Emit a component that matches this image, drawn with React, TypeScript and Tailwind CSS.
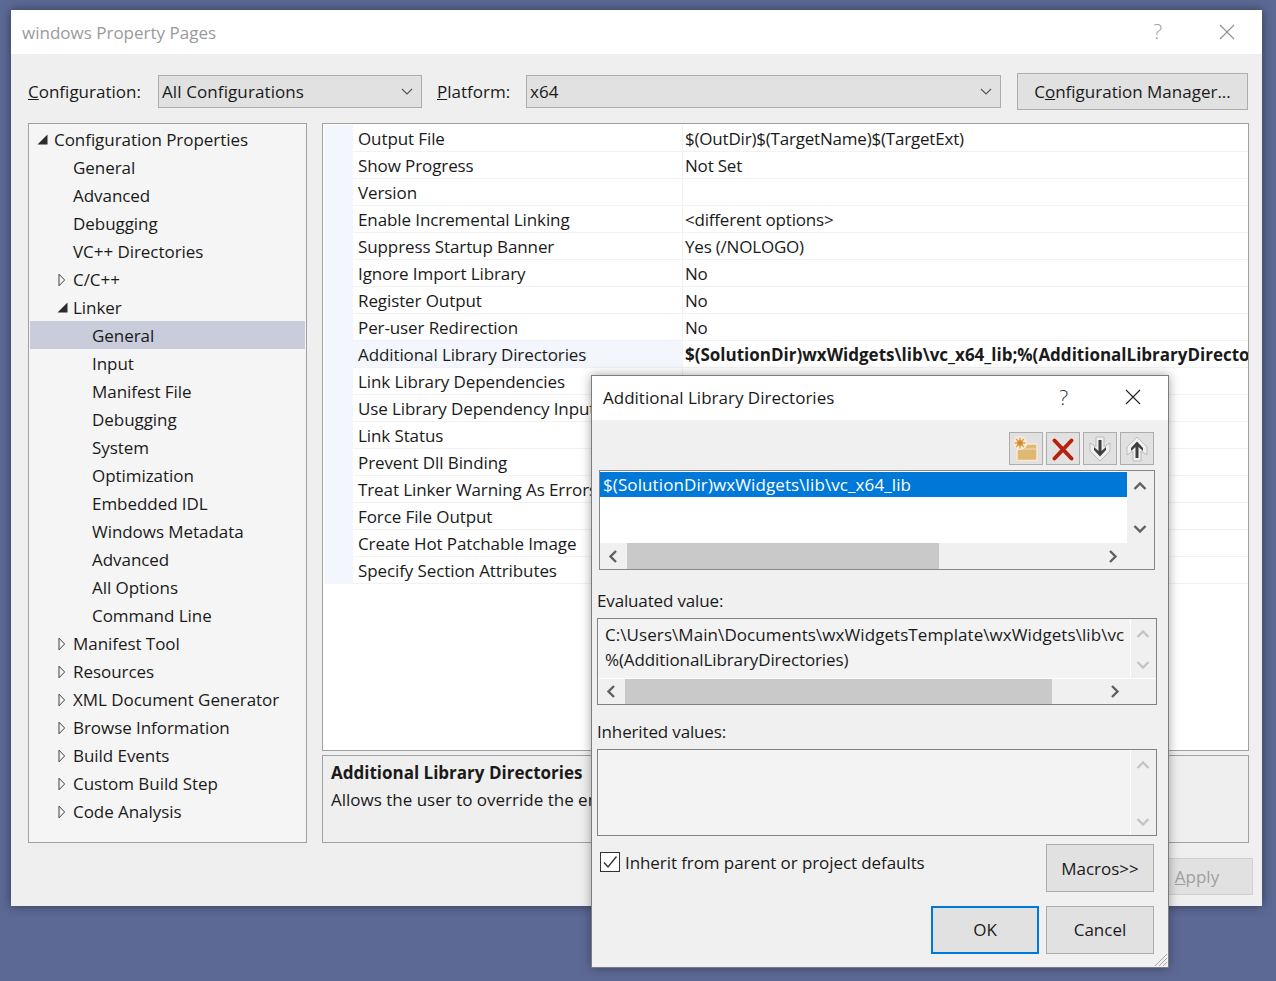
import React from "react";

const FONT = "font-['Open_Sans','Noto_Sans',sans-serif]";

type Dir = "up" | "down" | "left" | "right";
const CHEVRON: Record<Dir, string> = {
  up: "M1.5 8 L7 2.5 L12.5 8",
  down: "M1.5 3 L7 8.5 L12.5 3",
  left: "M8 1 L2.5 6.5 L8 12",
  right: "M3 1 L8.5 6.5 L3 12",
};

function Chevron({ dir, color = "#606060" }: { dir: Dir; color?: string }) {
  const vertical = dir === "up" || dir === "down";
  return (
    <svg width={vertical ? 14 : 11} height={vertical ? 11 : 13} viewBox={vertical ? "0 0 14 11" : "0 0 11 13"}>
      <path d={CHEVRON[dir]} fill="none" stroke={color} strokeWidth="2.4" />
    </svg>
  );
}

function Closed() {
  return (
    <svg width="8" height="14" viewBox="0 0 8 14" className="shrink-0">
      <path d="M1 1.2 L6.6 7 L1 12.8 Z" fill="none" stroke="#404040" strokeWidth="1" />
    </svg>
  );
}

function Open() {
  return (
    <svg width="11" height="11" viewBox="0 0 11 11" className="shrink-0">
      <path d="M10.5 0.5 V10.5 H0.5 Z" fill="#2b2b2b" />
    </svg>
  );
}

function Close({ color }: { color: string }) {
  return (
    <svg width="16" height="16" viewBox="0 0 16 16">
      <path d="M1 1 L15 15 M15 1 L1 15" stroke={color} strokeWidth="1.1" fill="none" />
    </svg>
  );
}

const tree: { t: string; lvl: number; k?: "o" | "c"; sel?: boolean }[] = [
  { t: "Configuration Properties", lvl: 0, k: "o" },
  { t: "General", lvl: 1 },
  { t: "Advanced", lvl: 1 },
  { t: "Debugging", lvl: 1 },
  { t: "VC++ Directories", lvl: 1 },
  { t: "C/C++", lvl: 1, k: "c" },
  { t: "Linker", lvl: 1, k: "o" },
  { t: "General", lvl: 2, sel: true },
  { t: "Input", lvl: 2 },
  { t: "Manifest File", lvl: 2 },
  { t: "Debugging", lvl: 2 },
  { t: "System", lvl: 2 },
  { t: "Optimization", lvl: 2 },
  { t: "Embedded IDL", lvl: 2 },
  { t: "Windows Metadata", lvl: 2 },
  { t: "Advanced", lvl: 2 },
  { t: "All Options", lvl: 2 },
  { t: "Command Line", lvl: 2 },
  { t: "Manifest Tool", lvl: 1, k: "c" },
  { t: "Resources", lvl: 1, k: "c" },
  { t: "XML Document Generator", lvl: 1, k: "c" },
  { t: "Browse Information", lvl: 1, k: "c" },
  { t: "Build Events", lvl: 1, k: "c" },
  { t: "Custom Build Step", lvl: 1, k: "c" },
  { t: "Code Analysis", lvl: 1, k: "c" },
];

const props: [string, string, boolean?][] = [
  ["Output File", "$(OutDir)$(TargetName)$(TargetExt)"],
  ["Show Progress", "Not Set"],
  ["Version", ""],
  ["Enable Incremental Linking", "<different options>"],
  ["Suppress Startup Banner", "Yes (/NOLOGO)"],
  ["Ignore Import Library", "No"],
  ["Register Output", "No"],
  ["Per-user Redirection", "No"],
  ["Additional Library Directories", "$(SolutionDir)wxWidgets\\lib\\vc_x64_lib;%(AdditionalLibraryDirectories)", true],
  ["Link Library Dependencies", ""],
  ["Use Library Dependency Inputs", ""],
  ["Link Status", ""],
  ["Prevent Dll Binding", ""],
  ["Treat Linker Warning As Errors", ""],
  ["Force File Output", ""],
  ["Create Hot Patchable Image", ""],
  ["Specify Section Attributes", ""],
];

function Select({ text, className }: { text: string; className: string }) {
  return (
    <div className={`h-[33px] flex items-center justify-between bg-[#e1e1e1] border border-[#adadad] pl-[3px] pr-[8px] ${className}`}>
      <span className="tracking-[0.1px] pt-[1px]">{text}</span>
      <svg width="12" height="7" viewBox="0 0 12 7">
        <path d="M1 1 L6 6 L11 1" fill="none" stroke="#555" strokeWidth="1.1" />
      </svg>
    </div>
  );
}

function ToolBtn({ children }: { children: React.ReactNode }) {
  return (
    <div className="w-[34px] h-[33px] bg-[#e1e1e1] border border-[#adadad] flex items-center justify-center">
      {children}
    </div>
  );
}

function DlgBtn({ children, primary }: { children: React.ReactNode; primary?: boolean }) {
  return (
    <div
      className={`w-[108px] h-[48px] bg-[#e1e1e1] flex items-center justify-center ${
        primary ? "border-2 border-[#0078d7]" : "border border-[#adadad]"
      }`}
    >
      {children}
    </div>
  );
}

export default function App() {
  return (
    <div className={`relative w-[1276px] h-[981px] overflow-hidden bg-[#5c6995] text-[#1a1a1a] text-[17px] leading-[24px] ${FONT}`}>
      {/* Main window */}
      <div className="absolute left-[11px] top-[10px] w-[1251px] h-[896px] bg-[#efefef] shadow-[0_0_10px_rgba(0,0,0,0.45)] flex flex-col">
        <div className="h-[44px] shrink-0 bg-white flex items-center pl-[11px] text-[#9a9a9a]">
          <span className="flex-1 pt-[2px]">windows Property Pages</span>
          <span className="text-[21px] font-light text-[#a0a0a0] mr-[57px] -mt-[3px]">?</span>
          <span className="mr-[27px] -mt-[1px]">
            <Close color="#8f8f8f" />
          </span>
        </div>
        <div className="flex-1 flex flex-col pl-[17px] pr-[13px] pt-[19px]">
          <div className="h-[37px] flex items-center">
            <span className="w-[130px]">
              <u>C</u>onfiguration:
            </span>
            <Select text="All Configurations" className="w-[264px]" />
            <span className="ml-[15px] w-[89px]">
              <u>P</u>latform:
            </span>
            <Select text="x64" className="w-[475px]" />
            <div className="ml-[16px] w-[231px] h-[37px] bg-[#e1e1e1] border border-[#adadad] flex items-center justify-center">
              <span className="pt-[1px]">
                C<u>o</u>nfiguration Manager...
              </span>
            </div>
          </div>
          <div className="mt-[13px] flex gap-[15px]">
            {/* Tree */}
            <div className="w-[279px] h-[720px] bg-[#f5f5f5] border border-[#a0a0a0] pt-[1px] px-[1px]">
              {tree.map((n, i) => (
                <div
                  key={i}
                  className={`relative h-[28px] flex items-center pt-[1px] ${n.sel ? "bg-[#c9ccdb]" : ""} ${
                    n.lvl === 0 ? "pl-[24px]" : n.lvl === 1 ? "pl-[43px]" : "pl-[62px]"
                  }`}
                >
                  {n.k && (
                    <span className={`absolute flex ${n.lvl === 0 ? "left-[7px]" : n.k === "o" ? "left-[27px]" : "left-[28px]"}`}>
                      {n.k === "o" ? <Open /> : <Closed />}
                    </span>
                  )}
                  <span className="tracking-[-0.05px]">{n.t}</span>
                </div>
              ))}
            </div>
            <div className="w-[927px] flex flex-col gap-[4px]">
              {/* Grid */}
              <div className="h-[628px] bg-white border border-[#a0a0a0] pt-[1px] pl-[1px] overflow-hidden">
                {props.map(([name, val, bold], i) => (
                  <div key={i} className="h-[27px] flex">
                    <div className="w-[29px] bg-[#f3f6fc]" />
                    <div
                      className={`w-[329px] flex items-center pl-[5px] pt-[2px] border-b border-[#f2f2f2] whitespace-nowrap overflow-hidden tracking-[-0.1px] ${
                        bold ? "bg-[#f3f6fc]" : ""
                      }`}
                    >
                      {name}
                    </div>
                    <div
                      className={`flex-1 min-w-0 flex items-center pl-[2px] pt-[2px] border-b border-l border-[#f2f2f2] whitespace-nowrap overflow-hidden ${
                        bold ? "font-bold" : "tracking-[-0.2px]"
                      }`}
                    >
                      {val}
                    </div>
                  </div>
                ))}
              </div>
              {/* Description */}
              <div className="h-[88px] border border-[#a0a0a0] pl-[8px] pt-[5px]">
                <div className="font-bold">Additional Library Directories</div>
                <div className="mt-[3px]">Allows the user to override the environmental library path</div>
              </div>
            </div>
          </div>
          <div className="mt-[15px] flex justify-end -mr-[4px]">
            <div className="w-[112px] h-[37px] bg-[#e1e1e1] border border-[#cfcfcf] flex items-center justify-center text-[#9f9f9f]">
              <span className="pt-[1px]">
                <u>A</u>pply
              </span>
            </div>
          </div>
        </div>
      </div>

      {/* Dialog */}
      <div className="absolute left-[591px] top-[375px] w-[578px] h-[593px] bg-[#f0f0f0] border border-[#7d7d7d] shadow-[0_0_10px_rgba(0,0,0,0.35)] flex flex-col">
        <div className="h-[44px] shrink-0 bg-white flex items-center pl-[11px]">
          <span className="flex-1 -mt-[1px]">Additional Library Directories</span>
          <span className="text-[21px] font-light mr-[57px] text-[#333] -mt-[3px]">?</span>
          <span className="mr-[27px] -mt-[2px]">
            <Close color="#222" />
          </span>
        </div>

        <div className="mt-[12px] mr-[14px] flex justify-end gap-[3px]">
          <ToolBtn>
            <svg width="30" height="28" viewBox="0 0 30 28">
              <path d="M6 12 H14 L16 9 H26 V25.5 H6 Z" fill="#e0b876" stroke="#f6ead2" strokeWidth="1.5" />
              <path d="M8 14 H25" stroke="#f3dfb8" strokeWidth="1" />
              <circle cx="9" cy="8" r="7" fill="#f8ecd6" />
              <path d="M9 2.5 V13.5 M3.5 8 H14.5 M5 4 L13 12 M13 4 L5 12" stroke="#dca04e" strokeWidth="1.3" />
              <circle cx="9" cy="8" r="2.8" fill="#d48a2e" />
            </svg>
          </ToolBtn>
          <ToolBtn>
            <svg width="26" height="26" viewBox="0 0 26 26">
              <path d="M4 4 L22 23 M22 4 L4 23" stroke="#ece0dc" strokeWidth="7" strokeLinecap="round" />
              <path d="M4.5 4.5 L21.5 22.5 M21.5 4.5 L4.5 22.5" stroke="#b3230f" strokeWidth="4" strokeLinecap="round" />
            </svg>
          </ToolBtn>
          <ToolBtn>
            <svg width="22" height="26" viewBox="0 0 22 26">
              <path d="M7 1 H15 V11 L21 7 V15 L11 25 L1 15 V7 L7 11 Z" fill="#f0f0f0" stroke="#bbb" strokeWidth="1" />
              <path d="M9.5 4 H12.5 V15 L17 11 V14 L11 20.5 L5 14 V11 L9.5 15 Z" fill="#3f3f3f" />
            </svg>
          </ToolBtn>
          <ToolBtn>
            <svg width="22" height="26" viewBox="0 0 22 26">
              <path d="M7 25 H15 V15 L21 19 V11 L11 1 L1 11 V19 L7 15 Z" fill="#f0f0f0" stroke="#bbb" strokeWidth="1" />
              <path d="M9.5 22 H12.5 V11 L17 15 V12 L11 5.5 L5 12 V15 L9.5 11 Z" fill="#3f3f3f" />
            </svg>
          </ToolBtn>
        </div>

        {/* List */}
        <div className="ml-[7px] mt-[5px] w-[556px] h-[100px] border border-[#828790] flex flex-col">
          <div className="h-[72px] flex">
            <div className="w-[527px] bg-white pt-[1px]">
              <div className="h-[25px] bg-[#0078d7] text-white pl-[3px] pt-[1px] flex items-center whitespace-nowrap tracking-[0.1px]">
                $(SolutionDir)wxWidgets\lib\vc_x64_lib
              </div>
            </div>
            <div className="flex-1 bg-[#f0f0f0] flex flex-col items-center justify-between pt-[10px] pb-[9px] pr-[1px]">
              <Chevron dir="up" />
              <Chevron dir="down" />
            </div>
          </div>
          <div className="flex-1 bg-[#f0f0f0] flex items-center">
            <div className="w-[27px] flex justify-center">
              <Chevron dir="left" />
            </div>
            <div className="w-[312px] h-full bg-[#c9c9c9]" />
            <div className="flex-1 flex justify-end pr-[36px]">
              <Chevron dir="right" />
            </div>
          </div>
        </div>

        <div className="ml-[5px] mt-[19px] tracking-[-0.15px]">Evaluated value:</div>
        <div className="ml-[5px] mt-[5px] w-[560px] h-[87px] border border-[#828282] flex flex-col">
          <div className="h-[59px] flex bg-white">
            <div className="w-[532px] bg-[#f3f3f3] pl-[7px] pt-[3px] leading-[25px] overflow-hidden whitespace-nowrap tracking-[0.07px]">
              <div>C:\Users\Main\Documents\wxWidgetsTemplate\wxWidgets\lib\vc</div>
              <div className="tracking-[-0.1px]">%(AdditionalLibraryDirectories)</div>
            </div>
            <div className="flex-1 bg-[#f0f0f0] border-l border-white flex flex-col items-center justify-between pt-[10px] pb-[8px] pr-[2px]">
              <Chevron dir="up" color="#c4c4c4" />
              <Chevron dir="down" color="#c4c4c4" />
            </div>
          </div>
          <div className="flex-1 bg-[#f0f0f0] border-t border-white flex items-center">
            <div className="w-[27px] flex justify-center">
              <Chevron dir="left" />
            </div>
            <div className="w-[427px] h-full bg-[#c9c9c9]" />
            <div className="flex-1 flex justify-end pr-[36px]">
              <Chevron dir="right" />
            </div>
          </div>
        </div>

        <div className="ml-[5px] mt-[15px] tracking-[-0.15px]">Inherited values:</div>
        <div className="ml-[5px] mt-[5px] w-[560px] h-[87px] border border-[#828282] flex bg-[#f3f3f3]">
          <div className="w-[532px]" />
          <div className="flex-1 bg-[#f0f0f0] border-l border-white flex flex-col items-center justify-between pt-[10px] pb-[8px] pr-[2px]">
            <Chevron dir="up" color="#c4c4c4" />
            <Chevron dir="down" color="#c4c4c4" />
          </div>
        </div>

        <div className="ml-[8px] mt-[8px] mr-[14px] flex justify-between">
          <div className="flex items-center gap-[5px] h-[22px] mt-[7px]">
            <div className="w-[20px] h-[20px] bg-white border border-[#333] flex items-center justify-center">
              <svg width="16" height="14" viewBox="0 0 16 14">
                <path d="M2 7.5 L6 12 L14.5 1.5" fill="none" stroke="#333" strokeWidth="1.4" />
              </svg>
            </div>
            <span className="pt-[1px] tracking-[-0.08px]">Inherit from parent or project defaults</span>
          </div>
          <DlgBtn>
            <span className="pt-[1px]">Macros&gt;&gt;</span>
          </DlgBtn>
        </div>

        <div className="mt-[14px] mr-[14px] flex justify-end gap-[7px]">
          <DlgBtn primary>OK</DlgBtn>
          <DlgBtn>Cancel</DlgBtn>
        </div>

        <svg width="14" height="14" viewBox="0 0 14 14" className="absolute right-0 bottom-0">
          <path d="M13 1 L1 13 M13 5 L5 13 M13 9 L9 13" stroke="#a8a8a8" strokeWidth="1" />
        </svg>
      </div>
    </div>
  );
}
